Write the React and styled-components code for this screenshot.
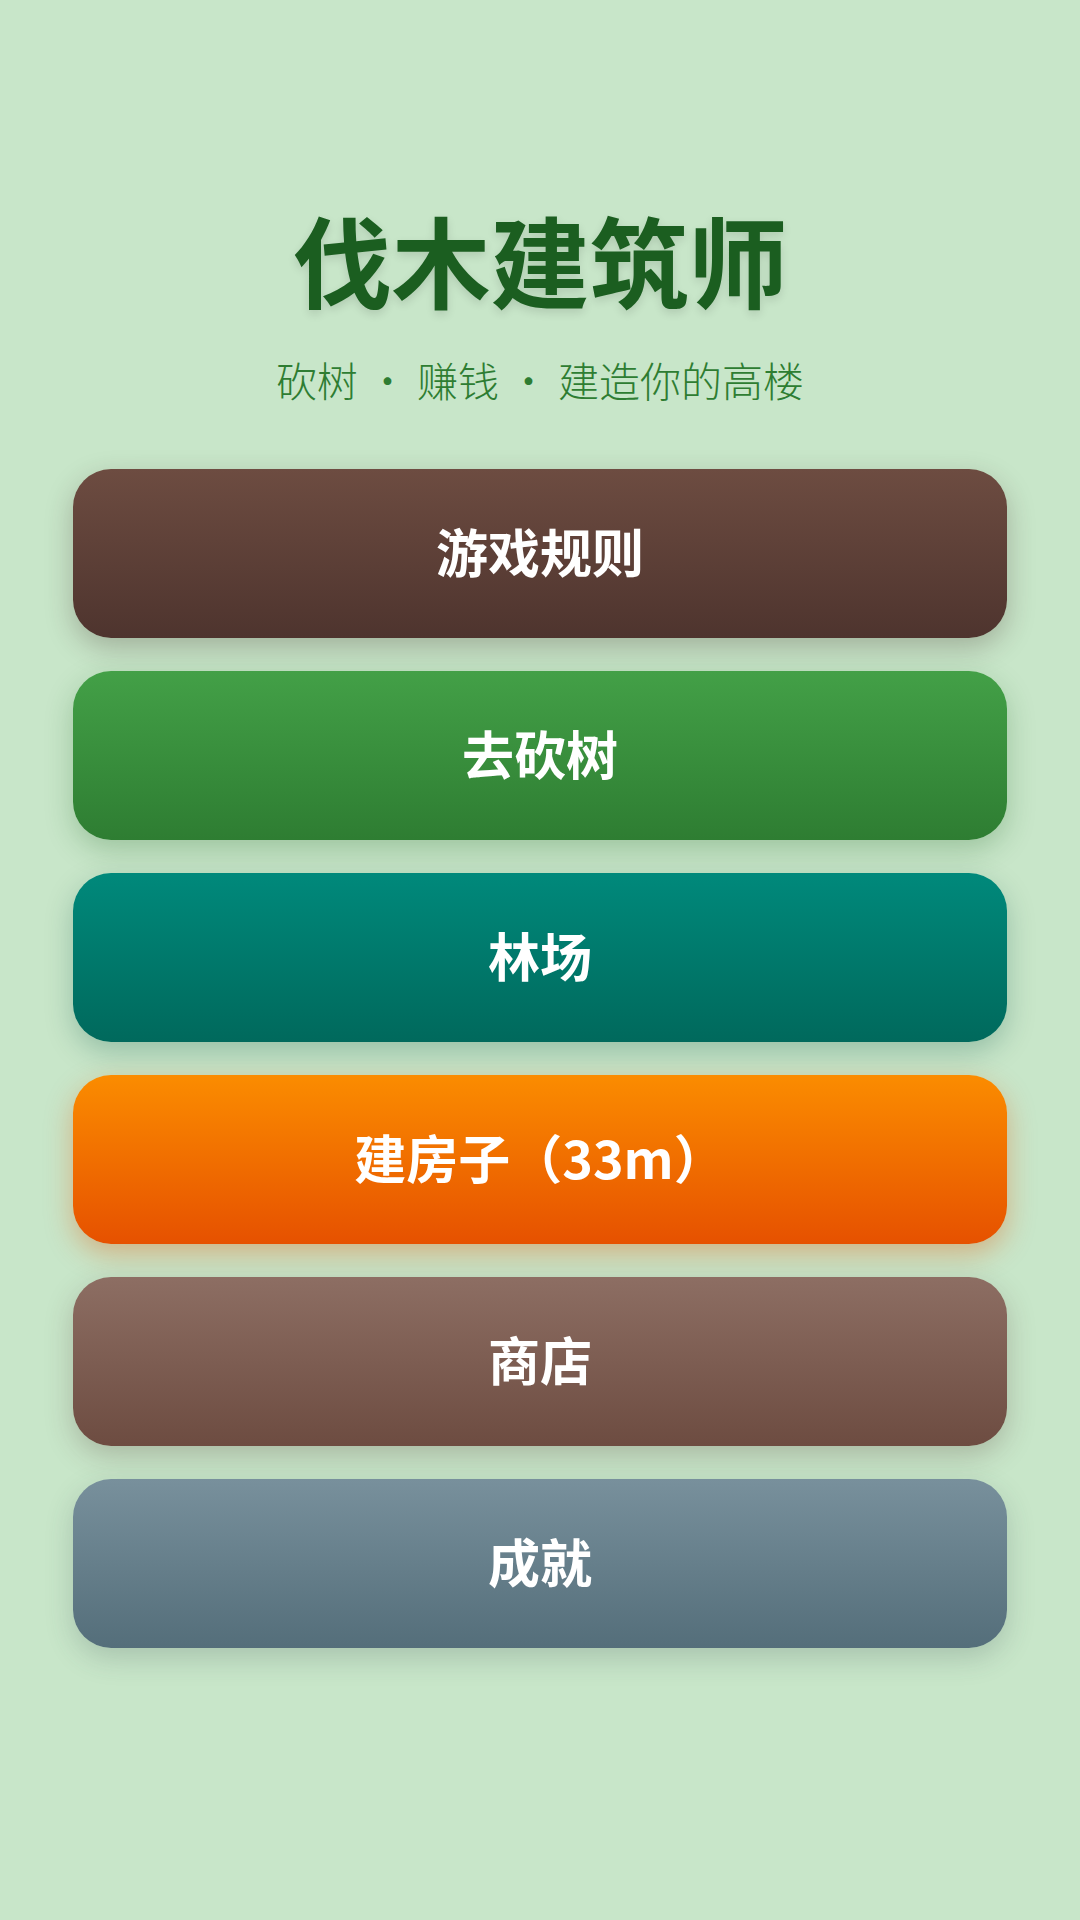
import React from 'react';
import styled, { createGlobalStyle } from 'styled-components';

const GlobalStyle = createGlobalStyle`
  html, body {
    margin: 0;
    padding: 0;
    background: #c8e6c9;
  }
  body {
    font-family: "Noto Sans CJK SC", "Noto Sans", sans-serif;
  }
`;

const Page = styled.div`
  min-height: 1920px;
  box-sizing: border-box;
  padding: 198px 73px 0;
  display: flex;
  flex-direction: column;
  align-items: center;
`;

const Title = styled.h1`
  margin: 0;
  font-size: 99px;
  line-height: 120px;
  font-weight: 700;
  color: #1b5e20;
  text-shadow: 0 4px 10px rgba(0, 0, 0, 0.12);
`;

const Subtitle = styled.p`
  margin: 33px 0 0;
  font-size: 41px;
  line-height: 56px;
  font-weight: 300;
  color: #2e7d32;
  white-space: pre;
`;

const Menu = styled.nav`
  margin-top: 62px;
  width: 100%;
  display: flex;
  flex-direction: column;
  gap: 33px;
`;

const MenuButton = styled.button`
  height: 169px;
  width: 100%;
  border: none;
  border-radius: 38px;
  padding: 0 0 6px;
  cursor: pointer;
  font-family: "Noto Sans CJK SC", "Noto Sans", sans-serif;
  font-size: 52px;
  font-weight: 700;
  color: #ffffff;
  background: linear-gradient(180deg, ${({ from }) => from}, ${({ to }) => to});
  box-shadow: 0 10px 28px ${({ glow }) => glow};
`;

const items = [
  { label: '游戏规则', from: '#6d4c41', to: '#4e342e', glow: 'rgba(62, 39, 35, 0.28)' },
  { label: '去砍树', from: '#43a047', to: '#2e7d32', glow: 'rgba(27, 94, 32, 0.25)' },
  { label: '林场', from: '#00897b', to: '#00695c', glow: 'rgba(0, 77, 64, 0.25)' },
  { label: '建房子（33m）', from: '#fb8c00', to: '#e65100', glow: 'rgba(230, 81, 0, 0.35)' },
  { label: '商店', from: '#8d6e63', to: '#6d4c41', glow: 'rgba(78, 52, 46, 0.25)' },
  { label: '成就', from: '#78909c', to: '#546e7a', glow: 'rgba(55, 71, 79, 0.22)' },
];

export default function App() {
  return (
    <>
      <GlobalStyle />
      <Page>
        <Title>伐木建筑师</Title>
        <Subtitle>砍树 · 赚钱 · 建造你的高楼</Subtitle>
        <Menu>
          {items.map((it) => (
            <MenuButton key={it.label} from={it.from} to={it.to} glow={it.glow}>
              {it.label}
            </MenuButton>
          ))}
        </Menu>
      </Page>
    </>
  );
}
